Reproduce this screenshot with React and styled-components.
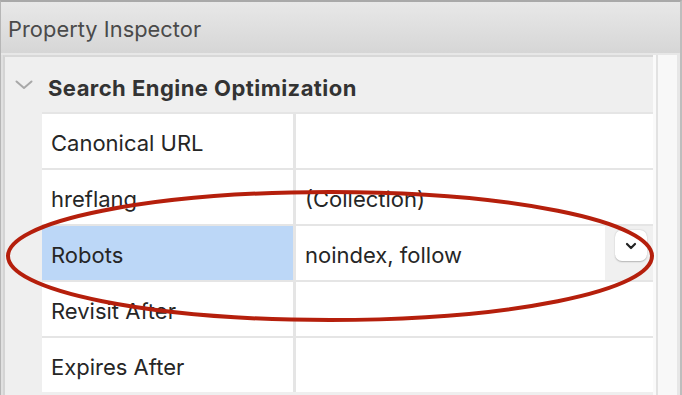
import React from "react";
import styled, { createGlobalStyle } from "styled-components";

const Global = createGlobalStyle`
  html, body { margin: 0; padding: 0; background: #ffffff; }
  body { font-family: Inter, "Noto Sans", "Liberation Sans", sans-serif; }
  * { box-sizing: border-box; }
`;

const Window = styled.div`
  position: relative;
  width: 682px;
  height: 395px;
  overflow: hidden;
  display: flex;
  flex-direction: column;
  border-top: 2px solid #a9a9a9;
  border-left: 1px solid #b6b6b6;
  border-right: 2px solid #bdbdbd;
  background: #efefef;
`;

const TitleBar = styled.div`
  height: 53px;
  flex: none;
  display: flex;
  align-items: center;
  padding-left: 7px;
  padding-top: 3px;
  background: linear-gradient(#e8e8e8, #d6d6d6);
  border-bottom: 2px solid #e7e7e7;
  color: #4a4a4a;
  font-size: 21.8px;
  letter-spacing: 0.05px;
`;

const Body = styled.div`
  flex: 1;
  display: flex;
  min-height: 0;
  border-left: 2px solid #e0e0e0;
`;

const Main = styled.div`
  flex: 1;
  display: flex;
  flex-direction: column;
  background: #efefef;
  border-left: 2px solid #d4d4d4;
  border-top: 2px solid #d8d8d8;
`;

const SectionHeader = styled.div`
  height: 55px;
  flex: none;
  display: flex;
  align-items: center;
  gap: 15px;
  padding-left: 10px;
  color: #333333;
  font-size: 22px;
  font-weight: 700;
  letter-spacing: 0.45px;
`;

const SectionTitle = styled.span`
  padding-top: 6px;
`;

const Table = styled.div`
  margin-left: 37px;
  display: grid;
  grid-template-columns: 251px 1fr;
  grid-auto-rows: 54px;
  column-gap: 3px;
  row-gap: 2px;
  padding-top: 2px;
  background: #e5e5e5;
`;

const Cell = styled.div`
  display: flex;
  align-items: center;
  padding-left: 9px;
  background: ${(p) => (p.$selected ? "#bcd7f7" : "#ffffff")};
  color: #262626;
  font-size: 22px;
  white-space: nowrap;
  overflow: hidden;
`;

const ValueText = styled.span`
  flex: 1;
  padding-top: 3px;
`;

const LabelText = styled.span`
  padding-top: 3px;
`;

const DropZone = styled.div`
  align-self: stretch;
  width: 48px;
  background: #f0f0f0;
  display: flex;
  align-items: flex-start;
  padding: 4px 0 0 10px;
`;

const DropButton = styled.div`
  width: 32px;
  height: 31px;
  border-radius: 7px;
  background: #ffffff;
  box-shadow: 0 0.5px 1.5px rgba(0, 0, 0, 0.25);
  display: flex;
  align-items: center;
  justify-content: center;
`;

const Gutter = styled.div`
  width: 3px;
  flex: none;
  background: #fafafa;
`;

const ScrollTrack = styled.div`
  width: 24px;
  flex: none;
  background: #f8f8f8;
  border-left: 2px solid #e2e2e2;
  border-right: 3px solid #e7e7e7;
`;

const Overlay = styled.svg`
  position: absolute;
  left: -1px;
  top: -2px;
  width: 682px;
  height: 395px;
  pointer-events: none;
`;

const rows = [
  { label: "Canonical URL", value: "" },
  { label: "hreflang", value: "(Collection)" },
  { label: "Robots", value: "noindex, follow", selected: true, dropdown: true },
  { label: "Revisit After", value: "" },
  { label: "Expires After", value: "" },
];

export default function App() {
  return (
    <>
      <Global />
      <Window>
        <TitleBar>Property Inspector</TitleBar>
        <Body>
          <Main>
            <SectionHeader>
              <svg width="18" height="10" viewBox="0 0 18 10">
                <path d="M1.5 1.5 L9 8 L16.5 1.5" fill="none" stroke="#a8a8a8" strokeWidth="2" strokeLinecap="round" strokeLinejoin="round" />
              </svg>
              <SectionTitle>Search Engine Optimization</SectionTitle>
            </SectionHeader>
            <Table>
              {rows.map((r) => (
                <React.Fragment key={r.label}>
                  <Cell $selected={r.selected}>
                    <LabelText>{r.label}</LabelText>
                  </Cell>
                  <Cell>
                    <ValueText>{r.value}</ValueText>
                    {r.dropdown && (
                      <DropZone>
                        <DropButton>
                          <svg width="12" height="8" viewBox="0 0 12 8">
                            <path d="M2 2 L6 6 L10 2" fill="none" stroke="#222" strokeWidth="2.2" strokeLinecap="round" strokeLinejoin="round" />
                          </svg>
                        </DropButton>
                      </DropZone>
                    )}
                  </Cell>
                </React.Fragment>
              ))}
            </Table>
          </Main>
          <Gutter />
          <ScrollTrack />
        </Body>
        <Overlay viewBox="0 0 682 395">
          <ellipse cx="330" cy="256" rx="322" ry="64" fill="none" stroke="#b51f0c" strokeWidth="4" />
        </Overlay>
      </Window>
    </>
  );
}
